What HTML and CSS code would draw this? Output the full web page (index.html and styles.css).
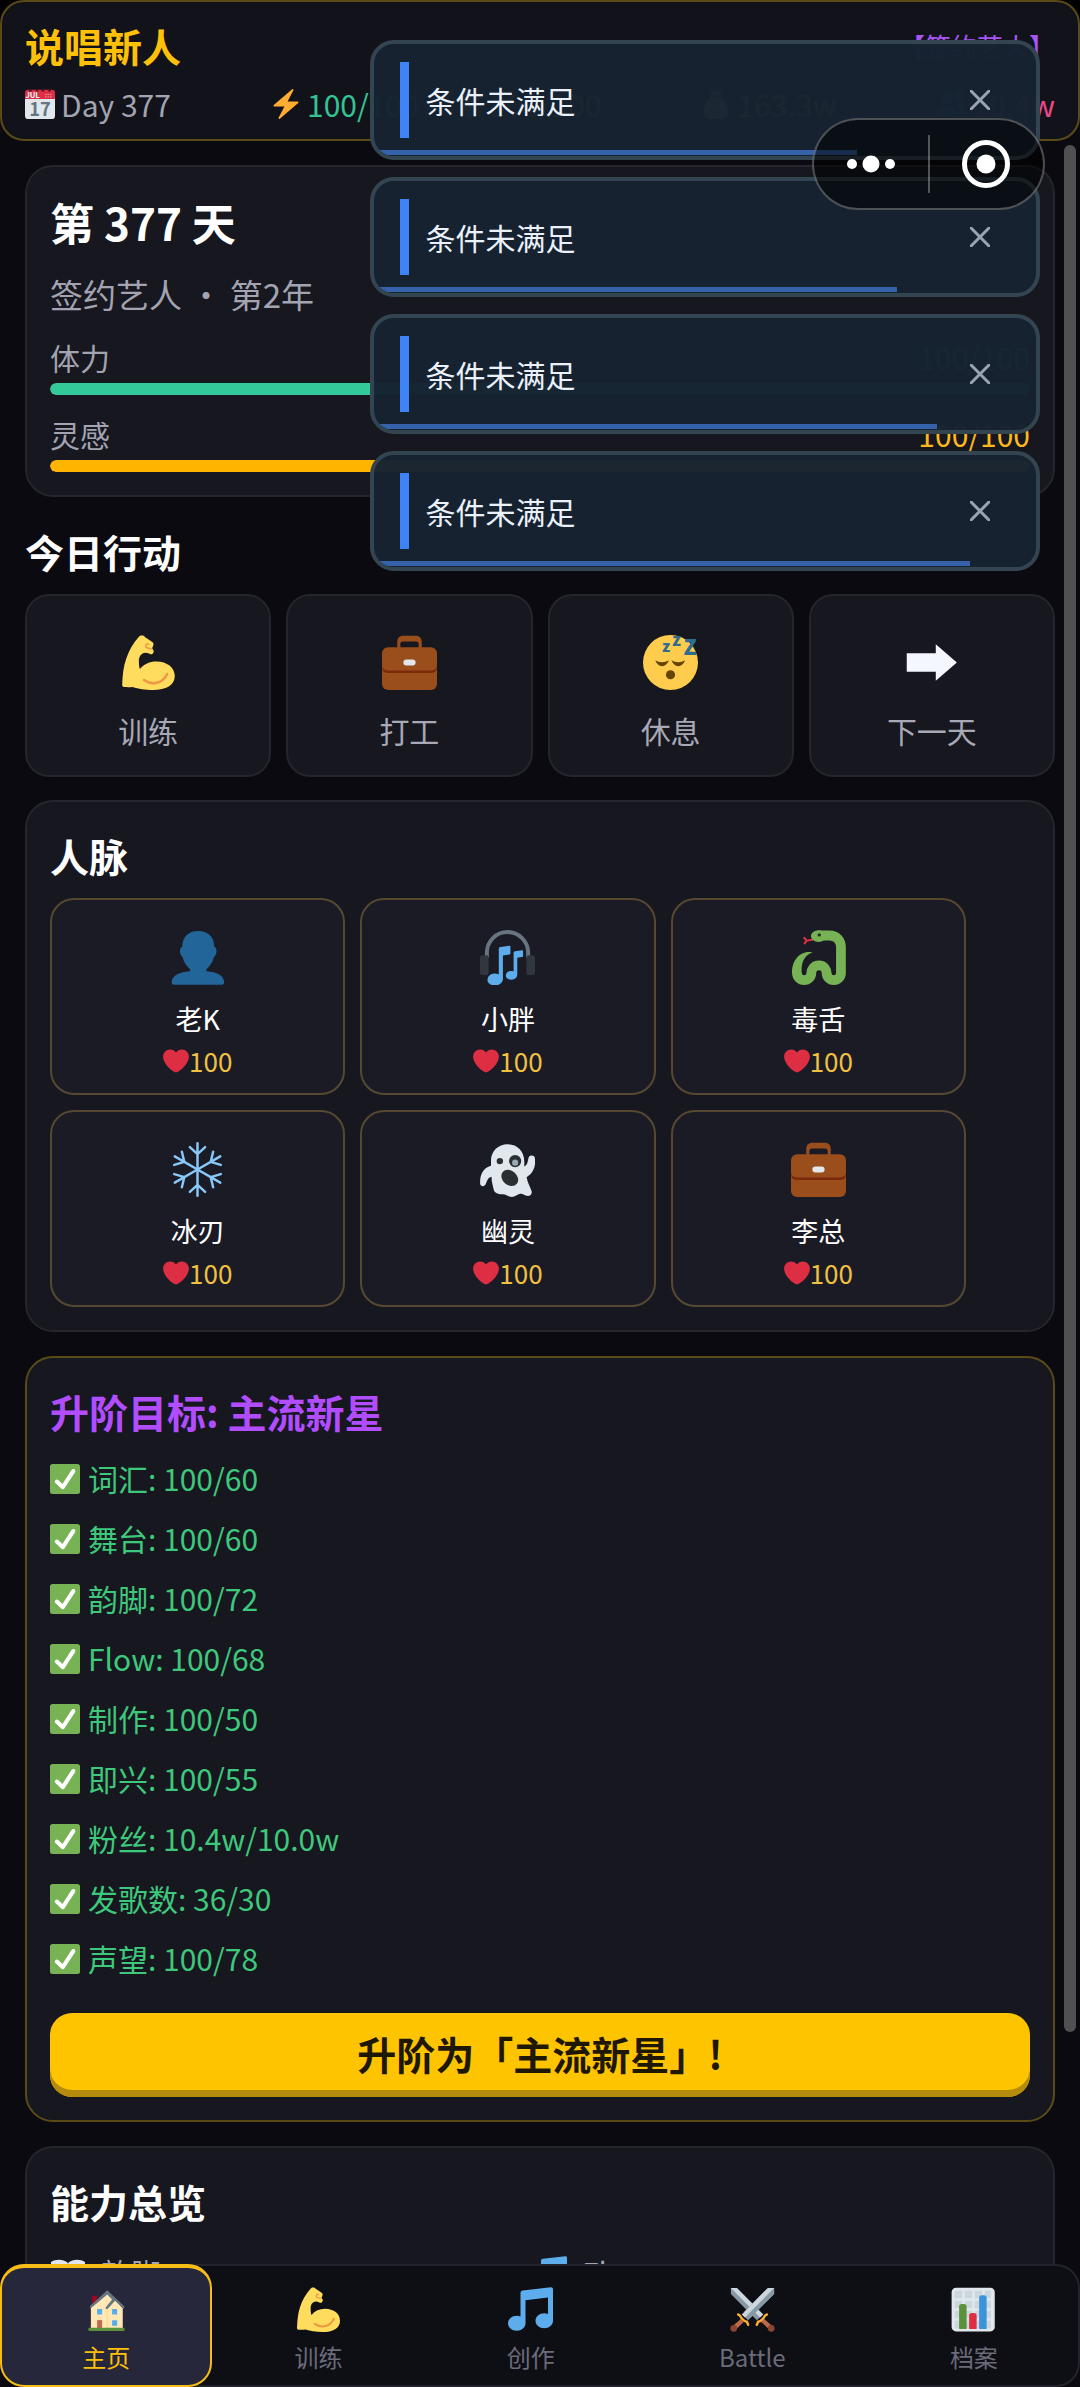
FILE: index.html
```html
<!DOCTYPE html>
<html lang="zh-CN">
<head>
    <meta charset="UTF-8">
    <meta name="viewport" content="width=device-width, initial-scale=1.0">
    <title>说唱新人</title>
    <link rel="stylesheet" href="styles.css">
</head>
<body>

    <!-- 图标 -->
    <svg class="sprite" aria-hidden="true">
        <symbol id="i-bolt" viewBox="0 0 36 36">
            <path fill="#FFAC33" d="M32.938 15.651C32.792 15.26 32.418 15 32 15H19.925L26.89 1.458c.219-.426.106-.947-.271-1.243C26.437.071 26.218 0 26 0c-.233 0-.466.082-.653.243L18 6.588 3.347 19.243c-.316.273-.43.714-.284 1.105S3.582 21 4 21h12.075L9.11 34.542c-.219.426-.106.947.271 1.243.182.144.401.215.619.215.233 0 .466-.082.653-.243L18 29.412l14.653-12.655c.317-.273.43-.714.285-1.106z"/>
        </symbol>
        <symbol id="i-bulb" viewBox="0 0 36 36">
            <path fill="#FFD983" d="M29 11a11 11 0 0 0-22 0c0 7 6 8 6 16h10c0-8 6-9 6-16z"/>
            <path fill="#99AAB5" d="M13 28h10v4l-3 3h-4l-3-3z"/>
        </symbol>
        <symbol id="i-money" viewBox="0 0 36 36">
            <path fill="#FDD888" d="M12 9h12c6 6 9 13 9 19 0 5-3 8-8 8H11c-5 0-8-3-8-8 0-6 3-13 9-19zM11 1l4 2 3-2 3 2 4-2-2 7H13z"/>
            <path fill="#BF6952" d="M11 8h14v3H11z"/>
        </symbol>
        <symbol id="i-people" viewBox="0 0 36 36">
            <circle cx="12" cy="11" r="7" fill="#269"/>
            <path fill="#269" d="M0 33c0-10 4-13 12-13s12 3 12 13z"/>
            <circle cx="26" cy="9" r="6" fill="#269"/>
            <path fill="#269" d="M25 17c8 0 11 4 11 13H26c0-6-1-9-4-12z"/>
        </symbol>
        <symbol id="i-biceps" viewBox="0 0 36 36">
            <path fill="#FFDC5D" d="M13.6.4c1 0 1.500.3 2.200 1l4.700 3.200c.8.6.9 1.200.7 2l-.8 2.100.9 1.400c.3.8 0 1.500-.6 2.200-.7.6-1.300.4-2 0-2-.9-3.600-1-5 .1-1.700 1.300-2.100 3-2 5.100 0 2 .3 3.700.7 4.800 2.600-3.200 6.300-4.900 10.800-4.900 7 0 12 4 12 9.500 0 6-5.700 9.100-14.200 9.100-5.600 0-9.200-.8-13.500-2-2.100.2-3.700.1-5.400.1-1-.1-1.400-.7-1.300-1.700C1 26.300 1.600 20.500 3.400 15.500 5.200 10.200 8 5.200 11.600 1.300c.6-.6 1.100-.9 2-.9z"/>
            <path fill="none" stroke="#EF9645" stroke-width="1.600" stroke-linecap="round" d="M15 29.500c5.500 3.800 12.300 2.200 15.300-4"/>
            <path fill="none" stroke="#EF9645" stroke-width="1" stroke-linecap="round" d="M18 6c-1.600-.4-2.300 1-1.600 1.900.8 1 2.300.9 3.300 1.100"/>
        </symbol>
        <symbol id="i-case" viewBox="0 0 36 36">
            <path fill="#9A4E1C" d="M10 9V4.500C10 2 11.500.5 14 .5h8c2.500 0 4 1.500 4 4V9h-2V6c0-1-.6-1.700-1.700-1.700h-8.600C12.600 4.300 12 5 12 6v3z"/>
            <path fill="#9A4E1C" d="M4 8h28a4 4 0 0 1 4 4v20a4 4 0 0 1-4 4H4a4 4 0 0 1-4-4V12a4 4 0 0 1 4-4z"/>
            <path fill="#7C2A0C" d="M0 19c0 3 1.500 4.200 4.500 4.200h27c3 0 4.500-1.200 4.500-4.200v1.500c0 2.700-1 4-3 4.300H3c-2-.3-3-1.600-3-4.300z"/>
            <rect x="14" y="16" width="8" height="4" rx="2" fill="#E1E8ED"/>
        </symbol>
        <symbol id="i-arrow" viewBox="0 0 36 36">
            <path fill="#F5F7FF" d="M1.800 12h19V6l13.800 12-13.800 12v-6h-19z"/>
        </symbol>
        <symbol id="i-bust" viewBox="0 0 36 36">
            <path fill="#269" d="M18.500.7C25 .7 29 4.500 29 11.200c1.800 0 2.200 5-.2 6.300-.7 3.500-2.600 6-5 8.200V27c7 .4 11.600 3 11.600 7.200 0 1-.5 1.600-1.500 1.600H2.600c-1 0-1.500-.6-1.500-1.600C1.100 30 6.200 27.400 13.200 27v-1.300c-2.400-2.200-4.300-4.700-5-8.200-2.400-1.300-2-6.300-.2-6.300C8 4.500 12 .7 18.500.7z"/>
        </symbol>
        <symbol id="i-headphone" viewBox="0 0 36 36">
            <path fill="none" stroke="#66757F" stroke-width="2.600" d="M4.500 18v-3.200a13.500 13.500 0 0 1 27 0V18"/>
            <rect x="0" y="16.500" width="5.600" height="13" rx="1.600" fill="#31373D"/>
            <rect x="30.400" y="16.500" width="5.600" height="13" rx="1.600" fill="#31373D"/>
            <path fill="#5DADEC" d="M12.300 12.300c0-.7.400-1.100 1.100-1.200l5.800-.8c.4 0 .7.200.7.600v4.300c0 .5-.3.800-.8.900l-4.100.6v15.600c0 2-2.200 4-5.100 4s-5-1.500-5-3.600c0-2.300 2-4.200 4.800-4.200 1 0 1.900.2 2.600.6z"/>
            <path fill="#5DADEC" d="M22 14.900c0-.6.300-.9.900-1l4.600-.7c.4 0 .7.200.7.500v3.100c0 .5-.3.800-.7.900l-3.100.5v11c0 1.900-1.600 3.400-3.800 3.400s-3.700-1.200-3.700-2.800 1.500-3 3.400-3c.7 0 1.200.1 1.700.3z"/>
        </symbol>
        <symbol id="i-snake" viewBox="0 0 36 36">
            <path fill="none" stroke="#DD2E44" stroke-width="1.400" d="M14.500 6.200l-4.200.8-2-2.200M10.300 7L8.600 9.200"/>
            <path fill="none" stroke="#77B255" stroke-width="6.400" d="M18 3.600h7c5 0 7.700 3 7.700 8v16.500a4.700 4.700 0 0 1-9.400 0c0-2-1.500-5-5-5s-5 3-5 5a4.700 4.700 0 0 1-9.400 0"/>
            <path fill="#77B255" d="M.7 28.500C.3 19.500 6.500 13 14 14.700 8.500 16.500 6.300 22 7.100 28.500z"/>
            <ellipse cx="18" cy="4" rx="5" ry="3.800" fill="#77B255"/>
            <circle cx="18.500" cy="3.200" r="1.100" fill="#292F33"/>
        </symbol>
        <symbol id="i-snow" viewBox="0 0 36 36">
            <g fill="none" stroke="#88C9F9" stroke-width="1.600" stroke-linecap="round">
                <path id="arm" d="M18 18V.8M18 8l-5-4.700M18 8l5-4.700"/>
                <use href="#arm" transform="rotate(60 18 18)"/>
                <use href="#arm" transform="rotate(120 18 18)"/>
                <use href="#arm" transform="rotate(180 18 18)"/>
                <use href="#arm" transform="rotate(240 18 18)"/>
                <use href="#arm" transform="rotate(300 18 18)"/>
            </g>
        </symbol>
        <symbol id="i-ghost" viewBox="0 0 36 36">
            <path fill="#E1E8ED" d="M18 1.500c6.500 0 11 4.500 11 11.500v3c2.500-1 2.200-4.500 3-6.200.8-1.500 3.500-1.300 3.900.5.700 5-.5 9.700-5.400 12.700.7 4 2.500 6.500 3.300 9.200.5 2-1.300 3.500-3.300 3-1.700-.4-2.500-1.500-4-1.300-2.500.3-3.500 2.400-6.500 2-2-.3-3-1.700-5-1.700-2.500 0-5.500-.6-6-3-.5-2.800-1.600-5-1.400-8.500-3 .6-3 3.500-4.200 5.500-1 1.300-3.200.8-3.300-.9C-.2 21.700 1.900 17 7.200 15.500V12C7.200 6 12 1.500 18 1.500z"/>
            <circle cx="13" cy="12.500" r="2.100" fill="#292F33"/>
            <circle cx="23" cy="12.500" r="4" fill="#292F33"/>
            <circle cx="23" cy="13.500" r="2" fill="#99AAB5"/>
            <ellipse cx="19.500" cy="23.500" rx="6" ry="4.700" transform="rotate(40 19.500 23.500)" fill="#292F33"/>
        </symbol>
        <symbol id="i-heart" viewBox="0 0 36 36">
            <path fill="#DD2E44" d="M35.885 11.833c0-5.450-4.418-9.868-9.867-9.868-3.308 0-6.227 1.633-8.018 4.129-1.791-2.496-4.710-4.129-8.017-4.129-5.450 0-9.868 4.417-9.868 9.868 0 .772.098 1.520.266 2.241C1.751 22.587 11.216 31.568 18 34.034c6.783-2.466 16.249-11.447 17.617-19.959.170-.721.268-1.469.268-2.242z"/>
        </symbol>
        <symbol id="i-check" viewBox="0 0 36 36">
            <rect width="36" height="36" rx="3" fill="#77B255"/>
            <path fill="#FFF" d="M29.280 6.362c-1.156-.751-2.704-.422-3.458.736L14.936 23.877l-5.029-4.650c-1.014-.938-2.596-.875-3.533.138-.937 1.014-.875 2.596.139 3.533l7.209 6.666c.480.445 1.090.665 1.696.665.673 0 1.534-.282 2.099-1.139.332-.506 12.500-19.270 12.500-19.270.751-1.159.421-2.707-.737-3.458z"/>
        </symbol>
        <symbol id="i-book" viewBox="0 0 36 36">
            <path fill="#3B88C3" d="M0 10h36v22H0z"/>
            <path fill="#E1E8ED" d="M1 6c5-3 12-3 17 1 5-4 12-4 17-1v23c-6-2-12-2-17 2-5-4-11-4-17-2z"/>
            <path stroke="#99AAB5" d="M18 7v24"/>
        </symbol>
        <symbol id="i-music" viewBox="0 0 36 36">
            <path fill="#5DADEC" d="M34.209.206L11.791 2.793C10.806 2.907 10 3.811 10 4.803v18.782C9.090 23.214 8.075 23 7 23c-3.865 0-7 2.685-7 6 0 3.314 3.135 6 7 6s7-2.686 7-6V10.539l18-2.077v13.124c-.910-.372-1.925-.586-3-.586-3.865 0-7 2.685-7 6 0 3.314 3.135 6 7 6s7-2.686 7-6V1.803c0-.992-.806-1.710-1.791-1.597z"/>
        </symbol>
        <symbol id="i-home" viewBox="0 0 36 36">
            <path fill="#A0041E" d="M6.500 7h4v7h-4z"/>
            <path fill="#FFE8B6" d="M5.500 15L18.600 4 31 17v16.500H5.500z"/>
            <path fill="#FFD983" d="M18 17h1v16h-1z"/>
            <path fill="#66757F" d="M18.600 2.500L32 15.200c.6.700.4 1.500-.2 2l-7-6.200-6 6.500c-1 .4-1.700-.2-1.500-1.200L22.500 10 18.600 6 5.500 17c-.8-.2-1.200-1.200-.5-2z"/>
            <path fill="#55ACEE" d="M10.500 17.500h4v4.500h-4zM22.500 17.500h4v4.500h-4zM22.500 26.500h4V31h-4z"/>
            <path fill="#C1694F" d="M10.500 26.500h4v6.500h-4z"/>
            <rect x="3.500" y="32.500" width="29" height="2.700" rx="1" fill="#5C913B"/>
        </symbol>
        <symbol id="i-swords" viewBox="0 0 36 36">
            <g id="sword">
                <path fill="#BE6A4A" d="M8.600 25.500l2.400 2.400-6.500 6.300-2.700-2.700z"/>
                <circle cx="3" cy="33" r="2.700" fill="#8A4633"/>
                <path fill="#8899A6" d="M35.300.700v4.800L14.500 26.500l-5-4.500L30.500.700z"/>
                <path fill="#CCD6DD" d="M30.500.700h4.800L12 24.300 9.500 22z"/>
                <path fill="none" stroke="#FFAC33" stroke-width="2" stroke-linecap="round" d="M6.500 22c1.800.3 1.800 1.800 3 3.200s2.500 2.500 4 2.500l1 2.500"/>
            </g>
            <use href="#sword" transform="matrix(-1 0 0 1 36 0)"/>
            <path fill="#8899A6" d="M35.300.700v4.800L16.300 24.700l-5-4.500L30.500.700z"/>
            <path fill="#CCD6DD" d="M30.500.700h4.800L13.500 22.800l-2.200-2.600z"/>
        </symbol>
        <symbol id="i-chart" viewBox="0 0 36 36">
            <rect x=".5" y=".5" width="34.500" height="35" rx="3.500" fill="#E1E8ED"/>
            <path fill="#CCD6DD" d="M3 3h6v6H3zM11 3h6v6h-6zM19 3h6v6h-6zM27 3h5v6h-5zM3 11h6v6H3zM11 11h6v6h-6zM19 11h6v6h-6zM27 11h5v6h-5zM3 19h6v6H3zM11 19h6v6h-6zM19 19h6v6h-6zM27 19h5v6h-5zM3 27h6v6H3zM11 27h6v6h-6zM19 27h6v6h-6zM27 27h5v6h-5z"/>
            <path fill="#5C913B" d="M6.500 33.500V15.500c0-1.200.8-2 2-2h2c1.200 0 2 .8 2 2v18z"/>
            <path fill="#DD2E44" d="M14.500 33.500V22.700c0-1.200.8-2 2-2h2c1.200 0 2 .8 2 2v10.800z"/>
            <path fill="#3B94D9" d="M22.500 33.500V8.500c0-1.200.8-2 2-2h2c1.200 0 2 .8 2 2v25z"/>
        </symbol>
    </svg>

    <div class="app">
        <header class="topbar">
            <div class="topbar-head">
                <h1 class="topbar-title">说唱新人</h1>
                <span class="rank">【签约艺人】</span>
            </div>
            <div class="stats">
                <span class="stat">
                    <svg viewBox="0 0 36 36">
                        <path fill="#E1E8ED" d="M0 10h36v22a4 4 0 0 1-4 4H4a4 4 0 0 1-4-4z"/>
                        <path fill="#DD2E44" d="M0 12V5a4 4 0 0 1 4-4h28a4 4 0 0 1 4 4v7z"/>
                        <path fill="#50131c" d="M5 0h3v3H5zM13 0h3v3h-3zM20 0h3v3h-3zM28 0h3v3h-3z"/>
                        <path fill="#f4abba" d="M24 6h2v1h-2zM27 6h2v1h-2zM30 6h2v1h-2zM24 9h2v1h-2zM27 9h2v1h-2zM30 9h2v1h-2z"/>
                        <text x="9" y="11" font-size="9" font-weight="700" fill="#fff" text-anchor="middle">JUL</text>
                        <text x="18" y="32" font-size="22" font-weight="700" fill="#66757F" text-anchor="middle">17</text>
                    </svg>
                    Day 377
                </span>
                <span class="stat-group">
                    <span class="stat energy"><svg><use href="#i-bolt"/></svg>100/100</span>
                    <span class="stat ideas"><svg><use href="#i-bulb"/></svg>100/100</span>
                </span>
                <span class="stat money"><svg><use href="#i-money"/></svg>163.3w</span>
                <span class="stat fans"><svg><use href="#i-people"/></svg>10.4w</span>
            </div>
        </header>

        <main class="content">
            <section class="card day">
                <h2 class="day-title">第 377 天</h2>
                <p class="day-sub">签约艺人 ・ 第2年</p>
                <div class="meter">
                    <div class="meter-label"><span>体力</span><span class="energy">100/100</span></div>
                    <div class="meter-track"><div class="meter-fill fill-energy" style="width: 100%"></div></div>
                </div>
                <div class="meter">
                    <div class="meter-label"><span>灵感</span><span class="ideas">100/100</span></div>
                    <div class="meter-track"><div class="meter-fill fill-ideas" style="width: 100%"></div></div>
                </div>
            </section>

            <section class="today">
                <h2 class="heading">今日行动</h2>
                <div class="actions">
                    <button class="action"><svg><use href="#i-biceps"/></svg>训练</button>
                    <button class="action"><svg><use href="#i-case"/></svg>打工</button>
                    <button class="action">
                        <svg viewBox="0 0 36 36">
                            <circle cx="18" cy="18" r="18" fill="#FFCC4D"/>
                            <path fill="#664500" d="M8 16.600c2.800 1.700 6.200 1.700 9 0-1 2.500-2.400 3.800-4.500 3.800S9 19.100 8 16.600zM18.600 16.600c2.800 1.700 6.200 1.700 9 0-1 2.500-2.400 3.800-4.500 3.800s-3.500-1.300-4.500-3.800z"/>
                            <circle cx="18" cy="26" r="3" fill="#664500"/>
                            <g fill="#2F6C91" font-weight="900">
                                <text x="12.500" y="10.800" font-size="10">z</text>
                                <text x="19" y="7.400" font-size="11">z</text>
                                <text x="26.500" y="13" font-size="14">Z</text>
                            </g>
                        </svg>
                        休息
                    </button>
                    <button class="action"><svg><use href="#i-arrow"/></svg>下一天</button>
                </div>
            </section>

            <section class="card">
                <h2 class="heading">人脉</h2>
                <div class="contacts">
                    <button class="contact">
                        <svg class="contact-icon"><use href="#i-bust"/></svg>
                        <span class="contact-name">老K</span>
                        <span class="contact-love"><svg><use href="#i-heart"/></svg>100</span>
                    </button>
                    <button class="contact">
                        <svg class="contact-icon"><use href="#i-headphone"/></svg>
                        <span class="contact-name">小胖</span>
                        <span class="contact-love"><svg><use href="#i-heart"/></svg>100</span>
                    </button>
                    <button class="contact">
                        <svg class="contact-icon"><use href="#i-snake"/></svg>
                        <span class="contact-name">毒舌</span>
                        <span class="contact-love"><svg><use href="#i-heart"/></svg>100</span>
                    </button>
                    <button class="contact">
                        <svg class="contact-icon"><use href="#i-snow"/></svg>
                        <span class="contact-name">冰刃</span>
                        <span class="contact-love"><svg><use href="#i-heart"/></svg>100</span>
                    </button>
                    <button class="contact">
                        <svg class="contact-icon"><use href="#i-ghost"/></svg>
                        <span class="contact-name">幽灵</span>
                        <span class="contact-love"><svg><use href="#i-heart"/></svg>100</span>
                    </button>
                    <button class="contact">
                        <svg class="contact-icon"><use href="#i-case"/></svg>
                        <span class="contact-name">李总</span>
                        <span class="contact-love"><svg><use href="#i-heart"/></svg>100</span>
                    </button>
                </div>
            </section>

            <section class="card card-gold">
                <h2 class="heading heading-goal">升阶目标: 主流新星</h2>
                <ul class="goals">
                    <li><svg><use href="#i-check"/></svg>词汇: 100/60</li>
                    <li><svg><use href="#i-check"/></svg>舞台: 100/60</li>
                    <li><svg><use href="#i-check"/></svg>韵脚: 100/72</li>
                    <li><svg><use href="#i-check"/></svg>Flow: 100/68</li>
                    <li><svg><use href="#i-check"/></svg>制作: 100/50</li>
                    <li><svg><use href="#i-check"/></svg>即兴: 100/55</li>
                    <li><svg><use href="#i-check"/></svg>粉丝: 10.4w/10.0w</li>
                    <li><svg><use href="#i-check"/></svg>发歌数: 36/30</li>
                    <li><svg><use href="#i-check"/></svg>声望: 100/78</li>
                </ul>
                <button class="promote">升阶为「主流新星」!</button>
            </section>

            <section class="card card-last">
                <h2 class="heading">能力总览</h2>
                <div class="skills">
                    <span class="skill"><svg><use href="#i-book"/></svg>韵脚</span>
                    <span class="skill"><svg><use href="#i-music"/></svg>Flow</span>
                </div>
            </section>
            <div class="scroll-thumb"></div>
        </main>

        <nav class="tabs">
            <a class="tab active" href="#home"><svg><use href="#i-home"/></svg>主页</a>
            <a class="tab" href="#train"><svg><use href="#i-biceps"/></svg>训练</a>
            <a class="tab" href="#create"><svg><use href="#i-music"/></svg>创作</a>
            <a class="tab" href="#battle"><svg><use href="#i-swords"/></svg>Battle</a>
            <a class="tab" href="#archive"><svg><use href="#i-chart"/></svg>档案</a>
        </nav>
    </div>

    <!-- 提示消息 -->
    <div class="toasts">
        <div class="toast" role="status">
            <span class="toast-mark"></span>
            <span class="toast-text">条件未满足</span>
            <button class="toast-close" aria-label="关闭"><svg viewBox="0 0 20 20"><path d="M1 1l18 18M19 1L1 19"/></svg></button>
            <span class="toast-timer" style="width: 73%"></span>
        </div>
        <div class="toast" role="status">
            <span class="toast-mark"></span>
            <span class="toast-text">条件未满足</span>
            <button class="toast-close" aria-label="关闭"><svg viewBox="0 0 20 20"><path d="M1 1l18 18M19 1L1 19"/></svg></button>
            <span class="toast-timer" style="width: 79%"></span>
        </div>
        <div class="toast" role="status">
            <span class="toast-mark"></span>
            <span class="toast-text">条件未满足</span>
            <button class="toast-close" aria-label="关闭"><svg viewBox="0 0 20 20"><path d="M1 1l18 18M19 1L1 19"/></svg></button>
            <span class="toast-timer" style="width: 85%"></span>
        </div>
        <div class="toast" role="status">
            <span class="toast-mark"></span>
            <span class="toast-text">条件未满足</span>
            <button class="toast-close" aria-label="关闭"><svg viewBox="0 0 20 20"><path d="M1 1l18 18M19 1L1 19"/></svg></button>
            <span class="toast-timer" style="width: 90%"></span>
        </div>
    </div>

    <!-- 小程序胶囊按钮 -->
    <div class="capsule">
        <button class="capsule-btn" aria-label="更多">
            <svg viewBox="0 0 50 50"><circle cx="6" cy="25" r="5"/><circle cx="25" cy="25" r="8.500"/><circle cx="44" cy="25" r="5"/></svg>
        </button>
        <button class="capsule-btn" aria-label="退出">
            <svg viewBox="0 0 50 50"><circle class="ring" cx="25" cy="25" r="21.500"/><circle cx="25" cy="25" r="9.500"/></svg>
        </button>
    </div>

</body>
</html>
```
FILE: styles.css
```css
* {
    box-sizing: border-box;
}
body {
    margin: 0;
    font-family: "Noto Sans CJK SC", "Noto Sans", sans-serif;
    font-size: 30px;
    color: #fff;
    background-color: #000;
}
h1, h2, p, ul {
    margin: 0;
    padding: 0;
}
button {
    font: inherit;
    color: inherit;
    border: none;
    padding: 0;
    background: none;
    cursor: pointer;
}
svg {
    display: block;
    flex: none;
}
.sprite {
    position: absolute;
    width: 0;
    height: 0;
}
.app {
    position: relative;
    display: flex;
    flex-direction: column;
    height: 100vh;
    overflow: hidden;
    background: linear-gradient(#000 24px, #0b0a11 24px);
}

/* 顶部状态栏 */
.topbar {
    padding: 17px 23px 13px;
    border: 2px solid #5a4a17;
    border-radius: 24px;
    background-color: #12131a;
}
.topbar-head {
    display: flex;
    justify-content: space-between;
    align-items: center;
    height: 52px;
    margin-bottom: 11px;
}
.topbar-title {
    font-size: 39px;
    line-height: 52px;
    color: #ffc107;
}
.rank {
    font-size: 26px;
    color: #a855f7;
}
.stats {
    display: flex;
    justify-content: space-between;
    line-height: 44px;
    color: #a3a3b2;
}
.stat-group {
    display: flex;
    gap: 35px;
}
.stat {
    display: flex;
    align-items: center;
    gap: 6px;
}
.stat svg {
    width: 30px;
    height: 30px;
}
.energy {
    color: #34c494;
}
.ideas {
    color: #ffb81c;
}
.money {
    color: #ffc107;
}
.fans {
    color: #ec4888;
}

/* 主内容 */
.content {
    position: relative;
    flex: 1;
    min-height: 0;
    overflow: hidden;
    padding: 24px 25px 0;
}
.scroll-thumb {
    position: absolute;
    top: 4px;
    right: 4px;
    width: 12px;
    height: 84%;
    border-radius: 6px;
    background-color: #505050;
}
.card {
    margin-bottom: 24px;
    padding: 23px;
    border: 2px solid #24252d;
    border-radius: 28px;
    background-color: #16171f;
}
.card-gold {
    border-color: #5a4a17;
}
.card-last {
    padding-bottom: 160px;
}
.heading {
    margin-bottom: 13px;
    font-size: 39px;
    line-height: 60px;
}
.heading-goal {
    color: #b14dff;
}
.day {
    margin-bottom: 24px;
}
.day-title {
    margin-bottom: 16px;
    font-size: 44px;
    line-height: 64px;
}
.day-sub {
    font-size: 33px;
    line-height: 48px;
    color: #a3a3b2;
}
.meter {
    margin-top: 18px;
}
.meter-label {
    display: flex;
    justify-content: space-between;
    margin-bottom: 5px;
    line-height: 42px;
}
.meter-label span:first-child {
    color: #a3a3b2;
}
.meter-track {
    height: 12px;
    border-radius: 6px;
    background-color: #262732;
    overflow: hidden;
}
.meter-fill {
    height: 100%;
    border-radius: 6px;
}
.fill-energy {
    background-color: #34c998;
}
.fill-ideas {
    background-color: #ffb400;
}

/* 今日行动 */
.today {
    margin-bottom: 23px;
}
.actions {
    display: grid;
    grid-template-columns: repeat(4, 1fr);
    gap: 15px;
}
.action {
    display: flex;
    flex-direction: column;
    align-items: center;
    gap: 18px;
    padding: 39px 0 23px;
    line-height: 44px;
    color: #a8a8b6;
    border: 2px solid #24252d;
    border-radius: 24px;
    background-color: #16171f;
}
.action svg, .contact-icon {
    width: 55px;
    height: 55px;
}

/* 人脉 */
.contacts {
    display: grid;
    grid-template-columns: repeat(3, 1fr);
    gap: 15px;
    padding-right: 64px;
}
.contact {
    display: flex;
    flex-direction: column;
    align-items: center;
    gap: 2px;
    padding: 30px 0 12px;
    line-height: 40px;
    border: 2px solid #574931;
    border-radius: 24px;
    background-color: #1b1b26;
}
.contact-icon {
    margin-bottom: 12px;
}
.contact-name {
    font-size: 27px;
}
.contact-love {
    display: flex;
    align-items: center;
    font-size: 26px;
    color: #f0c040;
}
.contact-love svg {
    width: 26px;
    height: 26px;
}

/* 升阶目标 */
.goals {
    display: flex;
    flex-direction: column;
    gap: 15px;
    margin-bottom: 32px;
    padding-top: 2px;
    list-style: none;
    line-height: 45px;
    color: #3ec87c;
}
.goals li {
    display: flex;
    align-items: center;
    gap: 8px;
}
.goals svg {
    width: 30px;
    height: 30px;
}
.promote {
    display: block;
    width: 100%;
    height: 84px;
    padding-bottom: 4px;
    font-size: 39px;
    font-weight: bold;
    color: #1f1800;
    border-radius: 22px;
    background-color: #ffc400;
    box-shadow: inset 0 -7px 0 #b48b0a;
}

/* 能力总览 */
.skills {
    display: grid;
    grid-template-columns: repeat(2, 1fr);
    padding: 12px 18px 0 0;
    line-height: 32px;
    color: #a3a3b2;
}
.skill {
    display: flex;
    align-items: flex-start;
    gap: 15px;
}
.skill svg {
    width: 36px;
    height: 36px;
}

/* 底部导航 */
.tabs {
    position: absolute;
    left: 0;
    right: 0;
    bottom: 0;
    display: flex;
    height: 123px;
    border-radius: 24px;
    background-color: #0e0f15;
    box-shadow: inset 0 0 0 2px #22232c;
}
.tab {
    flex: 1 1 auto;
    display: flex;
    flex-direction: column;
    align-items: center;
    gap: 9px;
    padding-top: 19px;
    font-size: 24px;
    line-height: 32px;
    color: #6b6b7a;
    text-decoration: none;
    border: 2px solid transparent;
    border-top-width: 4px;
    border-radius: 24px;
}
.tab svg {
    width: 45px;
    height: 45px;
}
.tab.active {
    color: #ffc107;
    border-color: #f5bd15;
    background-color: #26273a;
}

/* 提示消息 */
.toasts {
    position: absolute;
    top: 40px;
    right: 40px;
    width: 62%;
    display: flex;
    flex-direction: column;
    gap: 17px;
}
.toast {
    position: relative;
    display: flex;
    align-items: center;
    height: 120px;
    padding: 0 46px 0 26px;
    border: 4px solid #344552;
    border-radius: 24px;
    background-color: rgba(22, 35, 49, 0.98);
    overflow: hidden;
}
.toast-mark {
    width: 9px;
    height: 76px;
    margin-right: 16px;
    background-color: #3f83f8;
}
.toast-text {
    flex: 1;
    color: #eaf1fb;
}
.toast-close svg {
    width: 20px;
    height: 20px;
    fill: none;
    stroke: #9aa3b2;
    stroke-width: 3;
    stroke-linecap: round;
}
.toast-timer {
    position: absolute;
    left: 0;
    bottom: 1px;
    height: 5px;
    background-color: #3562a8;
}

/* 胶囊按钮 */
.capsule {
    position: absolute;
    top: 118px;
    right: 35px;
    display: flex;
    align-items: center;
    width: 233px;
    height: 92px;
    border: 2px solid rgba(255, 255, 255, 0.28);
    border-radius: 46px;
    background-color: rgba(0, 0, 0, 0.55);
}
.capsule-btn {
    flex: 1;
    display: flex;
    justify-content: center;
    height: 58px;
    align-items: center;
}
.capsule-btn + .capsule-btn {
    border-left: 2px solid rgba(255, 255, 255, 0.3);
}
.capsule-btn svg {
    width: 50px;
    height: 50px;
    fill: #fff;
}
.capsule-btn .ring {
    fill: none;
    stroke: #fff;
    stroke-width: 5;
}
```
